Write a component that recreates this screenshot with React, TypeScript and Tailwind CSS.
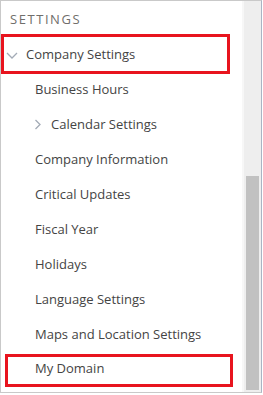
const items = [
  "Business Hours",
  "Calendar Settings",
  "Company Information",
  "Critical Updates",
  "Fiscal Year",
  "Holidays",
  "Language Settings",
  "Maps and Location Settings",
  "My Domain",
];

function ChevDown() {
  return (
    <svg width="12" height="7" viewBox="0 0 12 7" className="shrink-0">
      <path d="M1 1 L6 6 L11 1" fill="none" stroke="#a3abb6" strokeWidth="1.3" />
    </svg>
  );
}

function ChevRight() {
  return (
    <svg width="7" height="11" viewBox="0 0 7 11" className="shrink-0">
      <path d="M1.5 1 L6 5.5 L1.5 10" fill="none" stroke="#a3abb6" strokeWidth="1.3" />
    </svg>
  );
}

export default function App() {
  return (
    <div className="w-[263px] h-[395px] bg-white font-['Open_Sans',sans-serif]">
      <div className="flex w-[262px] h-[393px] border border-[#c9c9c9] border-r-[#a9b4c4]">
        <div className="flex-1 flex flex-col">
          <div className="pl-[9px] pt-[10px] h-[33px] text-[13px] leading-[16px] tracking-[0.12em] text-[#706e6b]">
            SETTINGS
          </div>
          <div className="flex items-center h-[40px] w-[229px] border-[3px] border-[#e8141e] pt-[2px] text-[13px] text-[#444444]">
            <span className="ml-[2px] flex">
              <ChevDown />
            </span>
            <span className="ml-[8px]">Company Settings</span>
          </div>
          <div className="flex flex-col -mt-[2px]">
            {items.map((label) => {
              if (label === "Calendar Settings") {
                return (
                  <div key={label} className="flex items-center h-[35px] pl-[33px] text-[13px] text-[#444444]">
                    <ChevRight />
                    <span className="ml-[10px]">{label}</span>
                  </div>
                );
              }
              if (label === "My Domain") {
                return (
                  <div
                    key={label}
                    className="flex items-center h-[33px] mt-[2px] ml-[4px] w-[228px] border-[3px] border-[#e8141e] pl-[27px] pb-[3px] text-[13px] text-[#444444]"
                  >
                    {label}
                  </div>
                );
              }
              return (
                <div key={label} className="flex items-center h-[35px] pl-[34px] text-[13px] text-[#444444]">
                  {label}
                </div>
              );
            })}
          </div>
        </div>
        <div className="w-[2px] bg-[#f7f7f7]" />
        <div className="w-[17px] flex flex-col bg-[#eeeeee]">
          <div className="mt-[175px] mx-[2px] mb-[2px] flex-1 bg-[#c1c1c1]" />
        </div>
      </div>
    </div>
  );
}
